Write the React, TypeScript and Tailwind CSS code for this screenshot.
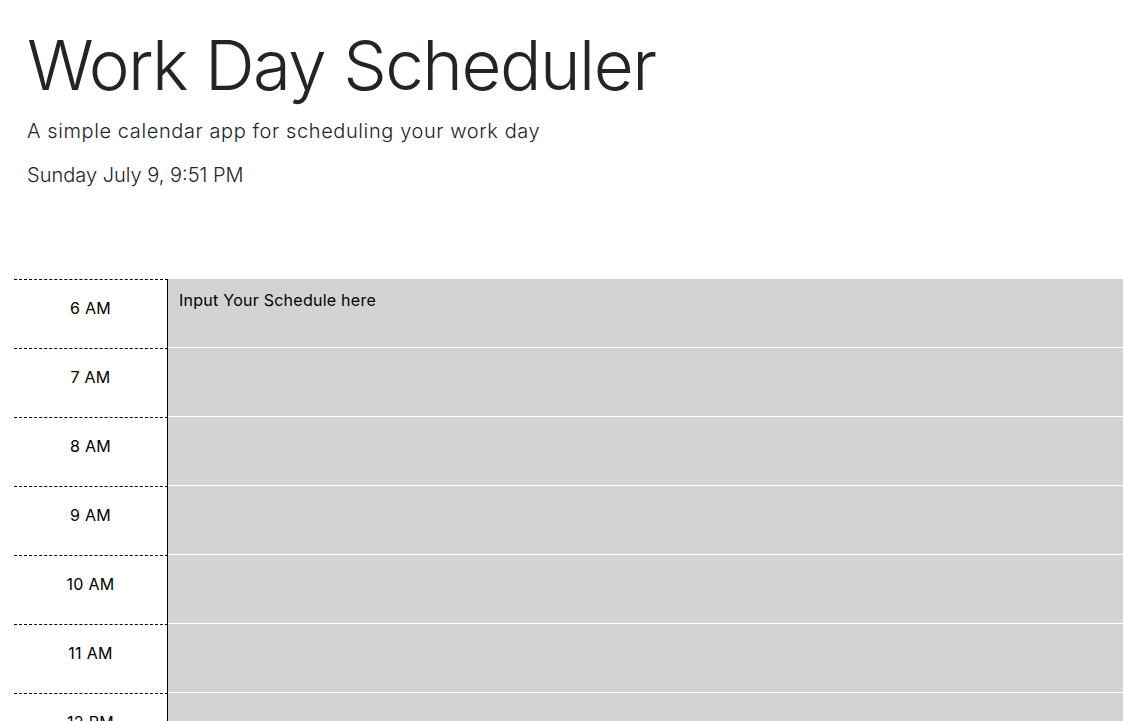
const hours = ["6 AM", "7 AM", "8 AM", "9 AM", "10 AM", "11 AM", "12 PM", "1 PM", "2 PM", "3 PM", "4 PM", "5 PM"];

export default function App() {
  return (
    <div className="min-h-screen bg-white text-[#212529]" style={{ fontFamily: 'Inter, sans-serif' }}>
      <header className="px-[27px] pt-[22px] pb-[89px]">
        <h1 className="text-[69px] font-light leading-[1.25] tracking-[-1.5px]">Work Day Scheduler</h1>
        <p className="mt-[8px] text-[20px] font-light leading-[1.5] tracking-[0.6px]">A simple calendar app for scheduling your work day</p>
        <p className="mt-[14px] text-[20px] font-light leading-[1.5]">Sunday July 9, 9:51 PM</p>
      </header>

      <div className="flex flex-col">
        {hours.map((hour, i) => (
          <div key={hour} className="flex h-[69px]">
            <div className="ml-[14px] w-[154px] shrink-0 border-t border-r border-black pt-[16px] text-center text-[16px] tracking-[0.3px] text-black" style={{ borderTopStyle: "dashed" }}>
              {hour}
            </div>
            <textarea
              className="flex-1 resize-none border-b border-white bg-[#d3d3d3] px-[11px] pt-[9px] text-[16px] leading-[1.5] tracking-[0.25px] text-black outline-none placeholder:text-black"
              placeholder={i === 0 ? "Input Your Schedule here" : ""}
            />
          </div>
        ))}
      </div>
    </div>
  );
}
